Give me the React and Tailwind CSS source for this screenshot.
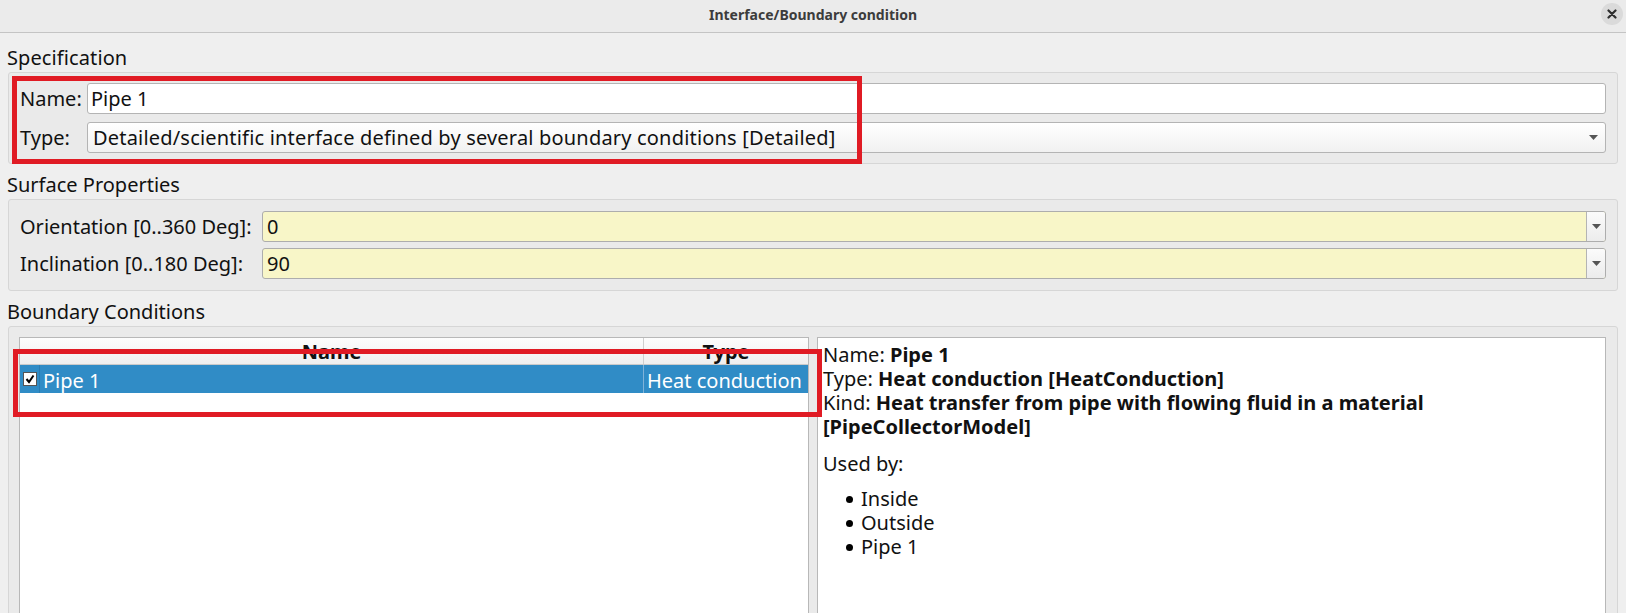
const Arrow = () => (
  <svg width="9" height="5" viewBox="0 0 9 5"><path d="M0 0 H9 L4.5 5 Z" fill="#555" /></svg>
);

const YellowCombo = ({ value }) => (
  <div className="flex-1 h-[31px] flex bg-[#f8f6c8] border border-[#adadad] rounded-[3px] overflow-hidden">
    <div className="flex-1 flex items-center pl-[4px]">{value}</div>
    <div className="w-[19px] border-l border-[#b4b4b4] bg-gradient-to-b from-[#fbfbfb] to-[#ececec] flex items-center justify-center">
      <Arrow />
    </div>
  </div>
);

export default function App() {
  return (
    <div className="relative w-[1626px] h-[613px] overflow-hidden bg-[#efefef] font-['Noto_Sans',sans-serif] text-[20px] leading-[24px] text-[#111]">
      {/* title bar */}
      <div className="relative h-[33px] bg-[#ebebeb] border-b border-[#c4c4c4] flex items-center justify-center">
        <span className="text-[14px] leading-[18px] font-bold text-[#3c3c3c] -mt-[2px]">Interface/Boundary condition</span>
        <div className="absolute right-[3px] top-[3px] w-[22px] h-[22px] rounded-full bg-[#dadada] flex items-center justify-center">
          <svg width="10" height="10" viewBox="0 0 10 10">
            <path d="M1.5 1.5 L8.5 8.5 M8.5 1.5 L1.5 8.5" stroke="#2f2f2f" strokeWidth="2.2" strokeLinecap="round" />
          </svg>
        </div>
      </div>

      <div className="pl-[7px] pr-[8px]">
        {/* Specification */}
        <div className="h-[39px] flex items-end pb-[2px] tracking-[0.1px]">Specification</div>
        <div className="ml-[1px] h-[92px] border border-[#d6d6d6] rounded-[3px] bg-[#eaeaea] pt-[10px] px-[11px] flex flex-col gap-[8px]">
          <div className="flex items-center h-[31px]">
            <div className="w-[67px] shrink-0">Name:</div>
            <div className="flex-1 h-[31px] bg-white border border-[#b4b4b4] rounded-[3px] flex items-center pl-[3px]">Pipe 1</div>
          </div>
          <div className="flex items-center h-[31px]">
            <div className="w-[67px] shrink-0">Type:</div>
            <div className="flex-1 h-[31px] bg-gradient-to-b from-[#ffffff] to-[#f1f1f1] border border-[#b4b4b4] rounded-[3px] flex items-center pl-[5px] pr-[7px]">
              <span className="flex-1 whitespace-nowrap tracking-[0.19px]">Detailed/scientific interface defined by several boundary conditions [Detailed]</span>
              <Arrow />
            </div>
          </div>
        </div>

        {/* Surface Properties */}
        <div className="h-[35px] flex items-end pb-[2px]">Surface Properties</div>
        <div className="ml-[1px] h-[92px] border border-[#d6d6d6] rounded-[3px] bg-[#eaeaea] pt-[11px] px-[11px] flex flex-col gap-[6px]">
          <div className="flex items-center h-[31px]">
            <div className="w-[242px] shrink-0">Orientation [0..360 Deg]:</div>
            <YellowCombo value="0" />
          </div>
          <div className="flex items-center h-[31px]">
            <div className="w-[242px] shrink-0">Inclination [0..180 Deg]:</div>
            <YellowCombo value="90" />
          </div>
        </div>

        {/* Boundary Conditions */}
        <div className="h-[35px] flex items-end pb-[2px]">
          <span className="w-[200px] overflow-hidden whitespace-nowrap">Boundary Conditions</span>
        </div>
        <div className="ml-[1px] h-[320px] border border-[#d6d6d6] rounded-[3px] bg-[#eaeaea] pt-[10px] pl-[10px] pr-[11px] flex gap-[8px]">
          {/* table */}
          <div className="w-[790px] shrink-0 bg-white border border-[#b8b8b8]">
            <div className="h-[27px] flex border-b border-[#cacaca] bg-gradient-to-b from-[#fdfdfd] to-[#efefef] font-bold">
              <div className="w-[624px] shrink-0 border-r border-[#cfcfcf] flex justify-center pt-[2px]">Name</div>
              <div className="flex-1 flex justify-center pt-[2px]">Type</div>
            </div>
            <div className="h-[28px] flex bg-[#308cc6] text-white">
              <div className="w-[20px] shrink-0 border-r border-[#2a7db3] flex items-center pl-[3px]">
                <div className="w-[14px] h-[14px] bg-white border border-[#555] flex items-center justify-center">
                  <svg width="10" height="10" viewBox="0 0 10 10">
                    <path d="M1.5 5 L4 8 L8.5 1.5" stroke="#000" strokeWidth="2" fill="none" />
                  </svg>
                </div>
              </div>
              <div className="w-[604px] shrink-0 border-r border-[#7fb3d9] flex items-center pl-[3px] pt-[3px]">Pipe 1</div>
              <div className="flex-1 flex items-center pl-[3px] pt-[3px] whitespace-nowrap overflow-hidden">Heat conduction</div>
            </div>
          </div>
          {/* details */}
          <div className="flex-1 bg-white border border-[#b8b8b8] pt-[5px] pl-[5px]">
            <div className="whitespace-nowrap">Name: <b>Pipe 1</b></div>
            <div className="whitespace-nowrap">Type: <b>Heat conduction [HeatConduction]</b></div>
            <div className="whitespace-nowrap">Kind: <b>Heat transfer from pipe with flowing fluid in a material</b></div>
            <div className="whitespace-nowrap font-bold">[PipeCollectorModel]</div>
            <div className="mt-[13px]">Used by:</div>
            <div className="mt-[11px] flex flex-col">
              {["Inside", "Outside", "Pipe 1"].map((t) => (
                <div key={t} className="flex items-center">
                  <span className="ml-[23px] w-[7px] h-[7px] rounded-full bg-black" />
                  <span className="ml-[8px]">{t}</span>
                </div>
              ))}
            </div>
          </div>
        </div>
      </div>

      {/* red highlight overlays */}
      <div className="absolute left-[12px] top-[76px] w-[850px] h-[88px] border-[5px] border-[#e01b24]" />
      <div className="absolute left-[13px] top-[349px] w-[809px] h-[68px] border-[5px] border-[#e01b24]" />
    </div>
  );
}
